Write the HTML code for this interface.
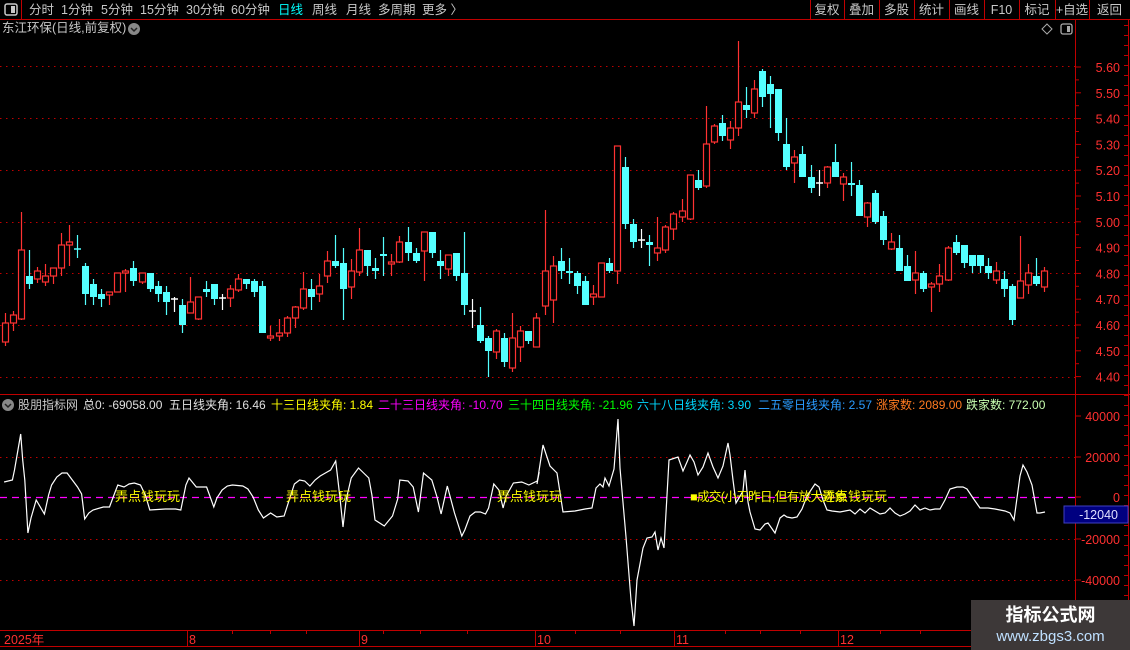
<!DOCTYPE html>
<html><head><meta charset="utf-8">
<style>
*{margin:0;padding:0;box-sizing:border-box}
body{width:1130px;height:650px;background:#000;overflow:hidden;font-family:"Liberation Sans","Noto Sans CJK SC",sans-serif;position:relative}
.t{position:absolute;white-space:nowrap;font-size:12px;line-height:14px}
svg{position:absolute;left:0;top:0}
</style></head><body>
<svg id="s" width="1130" height="650" xmlns="http://www.w3.org/2000/svg"></svg>

<div class="t" style="left:2px;top:21px;color:#c8c8c8;font-size:12.5px">东江环保(日线,前复权)</div>

<div class="t" style="left:18px;top:398px;color:#c8c8c8">股朋指标网</div>
<div class="t" style="left:83px;top:398px;color:#e0e0e0">总0: -69058.00</div>
<div class="t" style="left:169px;top:398px;color:#e0e0e0">五日线夹角: 16.46</div>
<div class="t" style="left:271px;top:398px;color:#ffff00">十三日线夹角: 1.84</div>
<div class="t" style="left:378px;top:398px;color:#ff00ff">二十三日线夹角: -10.70</div>
<div class="t" style="left:508px;top:398px;color:#00ff00">三十四日线夹角: -21.96</div>
<div class="t" style="left:637px;top:398px;color:#00d8ff">六十八日线夹角: 3.90</div>
<div class="t" style="left:758px;top:398px;color:#2a9cff">二五零日线夹角: 2.57</div>
<div class="t" style="left:876px;top:398px;color:#ff7a20">涨家数: 2089.00</div>
<div class="t" style="left:966px;top:398px;color:#c8ffb0">跌家数: 772.00</div>

<div class="t" style="left:115px;top:490px;color:#ffff00;font-size:13px">弄点钱玩玩</div>
<div class="t" style="left:286px;top:490px;color:#ffff00;font-size:13px">弄点钱玩玩</div>
<div class="t" style="left:497px;top:490px;color:#ffff00;font-size:13px">弄点钱玩玩</div>
<div class="t" style="left:822px;top:490px;color:#ffff00;font-size:13px">弄点钱玩玩</div>
<div class="t" style="left:690px;top:490px;color:#ffff00;font-size:12.5px;letter-spacing:-0.6px">■成交(小于昨日,但有放大迹象</div>

<div style="position:absolute;left:971px;top:600px;width:159px;height:50px;background:#3d3838"></div>
<div class="t" style="left:971px;width:159px;text-align:center;top:604px;color:#fff;font-size:18px;line-height:22px;font-weight:bold">指标公式网</div>
<div class="t" style="left:971px;width:159px;text-align:center;top:628px;color:#bfe0ff;font-size:15px;line-height:17px">www.zbgs3.com</div>

<script>
var s=document.getElementById('s'),h='';
function L(x1,y1,x2,y2,c,w,d){h+='<line x1="'+x1+'" y1="'+y1+'" x2="'+x2+'" y2="'+y2+'" stroke="'+c+'" stroke-width="'+(w||1)+'"'+(d?' stroke-dasharray="'+d+'"':'')+'/>';}
function T(x,y,t,c,sz,a){h+='<text x="'+x+'" y="'+y+'" fill="'+c+'" font-size="'+(sz||12)+'" font-family="Liberation Sans,Noto Sans CJK SC,sans-serif"'+(a?' text-anchor="'+a+'"':'')+'>'+t+'</text>';}
var R='#c00000';
L(0,19.5,1130,19.5,R);L(21.5,0,21.5,19,R);
h+='<rect x="5" y="4" width="12" height="11" rx="2" fill="none" stroke="#c8c8c8" stroke-width="1.5"/><rect x="11" y="6" width="4" height="7" fill="#c8c8c8"/>';
var tb=[[29,'分时'],[61,'1分钟'],[101,'5分钟'],[140,'15分钟'],[186,'30分钟'],[231,'60分钟'],[278,'日线'],[312,'周线'],[346,'月线'],[378,'多周期'],[422,'更多 〉']];
tb.forEach(function(a){T(a[0],14,a[1],a[1]=='日线'?'#00ffff':'#c8c8c8',12.5)});
var bs=[810,844,879,914,949,984,1019,1055,1089],bl=['复权','叠加','多股','统计','画线','F10','标记','+自选','返回'];
bs.forEach(function(x,i){L(x+.5,0,x+.5,19,R);var w=(i<8?bs[i+1]:1130)-x;T(x+w/2,14,bl[i],'#c8c8c8',12.5,'middle')});
h+='<circle cx="134" cy="29" r="6" fill="#888"/><path d="M131 28l3 3 3-3" stroke="#222" stroke-width="1.5" fill="none"/>';
h+='<path d="M1047 24l5 5-5 5-5-5z" fill="none" stroke="#aaa"/><rect x="1061" y="24" width="11" height="10" rx="2" fill="none" stroke="#aaa" stroke-width="1.3"/><rect x="1067" y="26" width="3" height="6" fill="#aaa"/>';
h+='<circle cx="8" cy="405" r="6" fill="#888"/><path d="M5 404l3 3 3-3" stroke="#222" stroke-width="1.5" fill="none"/>';
L(1075.5,20,1075.5,646,R);L(1128.5,20,1128.5,646,R);
L(0,394.5,1130,394.5,R);L(0,630.5,1130,630.5,R);L(0,646.5,1130,646.5,R);
[66,118,170,222,273,325,377].forEach(function(y){L(0,y+.5,1075,y+.5,R,1,'1.5 4.5')});
[457,539,580].forEach(function(y){L(0,y+.5,1075,y+.5,R,1,'1.5 4.5')});
var pl=['5.60','5.50','5.40','5.30','5.20','5.10','5.00','4.90','4.80','4.70','4.60','4.50','4.40'];
pl.forEach(function(p,i){var y=67+i*25.8;T(1120,y+5,p,'#ff3030',12.5,'end');L(1075,y,1081,y,R)});
for(var i=0;i<12;i++){var y=67+i*25.8+12.9;L(1075,y,1079,y,R)}
for(var y=25;y<646;y+=10)L(1124,y+.5,1128,y+.5,R);
[[416,'40000'],[457,'20000'],[497,'0'],[539,'-20000'],[580,'-40000']].forEach(function(a){T(1120,a[0]+5,a[1],'#ff3030',12.5,'end');L(1075,a[0],1081,a[0],R)});
h+='<rect x="1064" y="506" width="64" height="17" fill="#000080" stroke="#4040c0"/>';T(1118,519,'-12040','#e0e0ff',12.5,'end');
[[189,'8'],[361,'9'],[537,'10'],[676,'11'],[840,'12']].forEach(function(a){L(a[0]-1.5,630,a[0]-1.5,646,R);T(a[0],644,a[1],'#ff3030',12.5)});
T(4,644,'2025年','#ff3030',12.5);
[232,270,306,383,420,467,575,620,725,760,800,880,920].forEach(function(x){L(x+.5,631,x+.5,634,R)});
var C=[[323,342,313,346,'r'],[315,323,311,331,'r'],[250,319,212,320,'r'],[276,284,250,289,'c'],[271,279,267,283,'r'],[276,282,264,286,'r'],[268,276,268,284,'r'],[245,268,233,276,'r'],[242,245,225,266,'r'],[249,250,235,258,'c'],
[266,294,263,305,'c'],[284,297,279,305,'c'],[294,299,289,307,'c'],[292,295,292,305,'r'],[273,292,273,292,'r'],[271,273,269,292,'r'],[268,281,261,286,'c'],[273,282,273,284,'r'],[273,289,273,292,'c'],[286,294,281,302,'c'],
[292,302,286,315,'c'],[299,300,297,312,'w'],[305,325,299,333,'c'],[302,313,277,313,'r'],[297,319,297,320,'r'],[289,292,281,297,'c'],[284,299,284,305,'c'],[298,299,294,310,'w'],[289,298,285,307,'r'],[279,290,274,292,'r'],
[279,284,279,289,'c'],[281,292,279,297,'c'],[286,333,281,333,'c'],[336,338,326,341,'r'],[333,336,319,341,'r'],[318,333,316,337,'r'],[307,318,306,328,'r'],[289,308,272,310,'r'],[289,297,279,310,'c'],[286,294,274,302,'r'],
[261,276,251,283,'r'],[261,266,235,268,'c'],[263,289,248,320,'c'],[271,287,259,299,'r'],[250,272,228,276,'r'],[250,266,250,276,'c'],[268,271,258,279,'c'],[254,256,237,276,'c'],[262,264,254,276,'r'],[242,262,236,263,'r'],
[242,253,227,261,'c'],[253,261,248,263,'c'],[232,251,232,281,'r'],[232,253,232,258,'c'],[261,266,250,279,'c'],[255,269,255,276,'r'],[253,276,253,281,'c'],[273,305,232,315,'c'],[311,312,299,328,'w'],[325,341,307,343,'c'],
[338,351,336,377,'c'],[331,352,329,359,'r'],[338,362,333,367,'c'],[338,368,313,372,'r'],[331,347,326,362,'r'],[331,341,331,344,'c'],[318,347,313,347,'r'],[271,306,210,315,'r'],[266,300,256,323,'r'],[261,271,248,279,'c'],
[271,273,258,284,'c'],[273,286,271,294,'c'],[281,305,276,305,'c'],[294,297,285,305,'r'],[263,297,263,297,'r'],[263,271,258,273,'c'],[146,271,146,284,'r'],[167,224,157,229,'c'],[224,242,219,248,'c'],[240,241,229,248,'w'],
[242,245,235,266,'c'],[248,253,217,261,'r'],[227,250,225,253,'r'],[214,229,212,240,'r'],[211,217,199,222,'r'],[175,219,175,220,'r'],[180,188,170,190,'c'],[144,186,106,188,'r'],[126,142,124,144,'r'],[123,136,115,141,'c'],
[128,140,121,149,'r'],[102,128,41,136,'r'],[105,110,87,118,'c'],[89,113,80,118,'r'],[71,97,69,107,'c'],[84,94,76,128,'c'],[89,133,89,141,'c'],[144,167,118,170,'c'],[157,163,150,183,'r'],[154,177,146,177,'c'],
[177,188,165,193,'c'],[183,184,170,196,'w'],[167,183,166,188,'r'],[162,177,144,177,'c'],[177,184,173,201,'r'],[183,185,162,196,'c'],[185,216,180,216,'c'],[203,217,202,227,'r'],[193,222,190,224,'c'],[216,240,211,245,'c'],
[242,249,233,250,'r'],[248,271,235,271,'c'],[266,281,255,281,'c'],[273,280,251,294,'r'],[273,289,271,292,'c'],[284,287,282,312,'r'],[276,284,264,292,'r'],[248,280,246,281,'r'],[242,253,235,255,'c'],[245,263,245,268,'c'],
[255,266,255,273,'c'],[255,266,255,273,'c'],[266,273,258,279,'c'],[271,280,262,284,'r'],[279,289,271,297,'c'],[286,320,284,325,'c'],[281,298,236,298,'r'],[273,285,264,294,'r'],[276,284,258,286,'c'],[271,287,267,292,'r']];
var col={r:'#ff3232',c:'#54ffff',w:'#ffffff'};
C.forEach(function(k,i){var x=Math.round(4.5+i*8.06)+.5,c=col[k[4]];
 L(x,k[2],x,k[3],c,1.2);
 var bh=Math.max(k[1]-k[0],1);
 if(k[4]=='r')h+='<rect x="'+(x-3)+'" y="'+k[0]+'" width="6" height="'+bh+'" fill="#000" stroke="'+c+'" stroke-width="1.2"/>';
 else if(bh<=1.5)L(x-3.5,k[0],x+3.5,k[0],c,1.5);
 else h+='<rect x="'+(x-3.5)+'" y="'+k[0]+'" width="7" height="'+bh+'" fill="'+c+'"/>';
});
L(0,497.5,1075,497.5,'#ff00ff',1.2,'7 5');
var A=[[4,482],[12,480],[14,470],[20,434],[22,460],[24,480],[27,533],[30,518],[35,500],[43,514],[47,495],[50,485],[55,477],[60,473],[65,473],[70,480],[75,487],[79,494],[82,519],[86,513],[90,510],[100,507],[106,507],[110,496],[114,485],[120,487],[125,484],[130,483],[136,485],[141,496],[145,510],[160,509],[170,509],[175,510],[180,485],[183,478],[190,487],[200,487],[207,507],[210,498],[215,490],[220,486],[225,485],[235,486],[240,489],[245,497],[250,510],[255,518],[262,513],[268,517],[275,516],[280,500],[285,484],[290,480],[295,481],[300,486],[305,480],[310,476],[315,473],[320,470],[325,461],[329,497],[332,527],[335,500],[340,478],[347,468],[357,478],[360,495],[363,520],[372,526],[380,516],[385,499],[387,480],[395,481],[400,487],[405,512],[410,473],[418,480],[423,497],[427,514],[433,486],[440,513],[447,536],[450,530],[455,516],[460,512],[465,512],[470,514],[473,508],[478,484],[483,490],[487,508],[490,496],[497,483],[505,482],[512,485],[520,481],[522,472]];
var B=[[537,484],[543,445],[550,466],[557,473],[563,512],[575,511],[585,509],[592,508],[596,488],[600,484],[603,487],[605,478],[606,480],[609,486],[614,469],[618,419],[620,468],[626,537],[631,600],[634,626],[637,580],[643,548],[647,538],[652,537],[655,532],[658,550],[661,538],[664,548],[669,460],[678,457],[683,471],[687,462],[690,455],[694,462],[698,475],[703,467],[708,453],[713,467],[718,478],[723,466],[728,443],[730,455],[733,480],[736,503],[743,491],[745,470],[748,502],[750,512],[755,529],[760,530],[765,524],[768,523],[775,533],[780,518],[784,515],[787,517],[792,518],[797,517],[802,509],[807,496],[815,484],[819,487],[823,500],[827,510],[832,511],[840,512],[850,510],[855,514],[860,509],[865,513],[870,508],[875,511],[880,514],[885,513],[890,508],[895,513],[900,516],[905,514],[910,511],[915,505],[920,510],[925,508],[930,510],[935,509],[940,509],[945,500],[950,489],[957,487],[963,487],[967,489],[973,498],[980,508],[988,508],[995,509],[1000,510],[1005,511],[1010,513],[1014,520],[1020,476],[1023,465],[1027,472],[1032,485],[1037,513],[1040,513],[1045,512]];
var pts=A.map(function(p){return (p[0]*1.033).toFixed(1)+','+p[1]}).concat(B.map(function(p){return p[0]+','+p[1]}));
h+='<polyline points="'+pts.join(' ')+'" fill="none" stroke="#fff" stroke-width="1.2"/>';
s.innerHTML=h;
</script>
</body></html>
